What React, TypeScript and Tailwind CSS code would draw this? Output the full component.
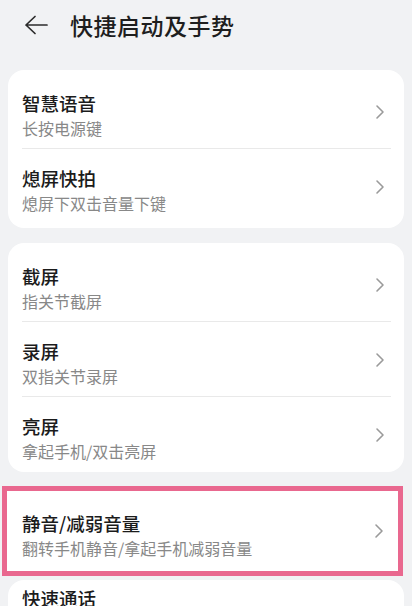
import React from "react";

type Item = { title: string; sub: string };

const group1: Item[] = [
  { title: "智慧语音", sub: "长按电源键" },
  { title: "熄屏快拍", sub: "熄屏下双击音量下键" },
];

const group2: Item[] = [
  { title: "截屏", sub: "指关节截屏" },
  { title: "录屏", sub: "双指关节录屏" },
  { title: "亮屏", sub: "拿起手机/双击亮屏" },
];

function Chevron() {
  return (
    <svg width="10" height="16" viewBox="0 0 10 16" className="shrink-0">
      <path d="M2 2 L8 8 L2 14" fill="none" stroke="#9a9a9a" strokeWidth="1.6" strokeLinecap="round" strokeLinejoin="round" />
    </svg>
  );
}

function Texts({ item, className }: { item: Item; className?: string }) {
  return (
    <div className={"flex-1 flex flex-col " + (className ?? "")}>
      <div className="text-[18.5px] leading-[24px] font-medium text-[#1b1b1b]">{item.title}</div>
      <div className="text-[16px] leading-[22px] mt-[2px] text-[#888888]">{item.sub}</div>
    </div>
  );
}

function Row({ item, divider }: { item: Item; divider?: boolean }) {
  return (
    <div className="flex items-center h-[75px] pl-[14px] pr-[19px] relative">
      <Texts item={item} className="pt-[6px]" />
      <Chevron />
      {divider && <div className="absolute left-[14px] right-[13px] bottom-0 h-px bg-[#e9e9e9]" />}
    </div>
  );
}

function Card({ items, className }: { items: Item[]; className?: string }) {
  return (
    <div className={"mx-2 bg-white rounded-2xl " + (className ?? "")}>
      {items.map((it, i) => (
        <Row key={it.title} item={it} divider={i < items.length - 1} />
      ))}
    </div>
  );
}

export default function App() {
  return (
    <div
      className="w-[412px] h-[606px] overflow-hidden bg-[#f1f2f4]"
      style={{ fontFamily: '"Noto Sans CJK SC", "Noto Sans", sans-serif' }}
    >
      <div className="h-[50px] flex items-center pl-6">
        <svg width="24" height="20" viewBox="0 0 24 20">
          <path d="M11 1.5 L2 10 L11 18.5 M2 10 H23" fill="none" stroke="#2b2b2b" strokeWidth="1.7" strokeLinecap="round" strokeLinejoin="round" />
        </svg>
        <div className="ml-[22px] text-[23px] font-medium text-[#1e1e1e] tracking-[0.5px]">快捷启动及手势</div>
      </div>

      <div className="mt-5">
        <Card items={group1} className="py-1" />
      </div>
      <div className="mt-[15px]">
        <Card items={group2} className="pt-1" />
      </div>

      <div className="mt-[14px] ml-[2px] mr-[9px] border-[5px] border-[#e9688f] bg-white">
        <div className="flex items-center h-[80px] pl-[15px] pr-[14px]">
          <Texts item={{ title: "静音/减弱音量", sub: "翻转手机静音/拿起手机减弱音量" }} className="pt-[7px]" />
          <Chevron />
        </div>
      </div>

      <div className="mt-1 mx-2 bg-white rounded-t-2xl h-[40px] pl-[14px] pt-[6px]">
        <div className="text-[18.5px] leading-[24px] font-medium text-[#1b1b1b]">快速通话</div>
      </div>
    </div>
  );
}
